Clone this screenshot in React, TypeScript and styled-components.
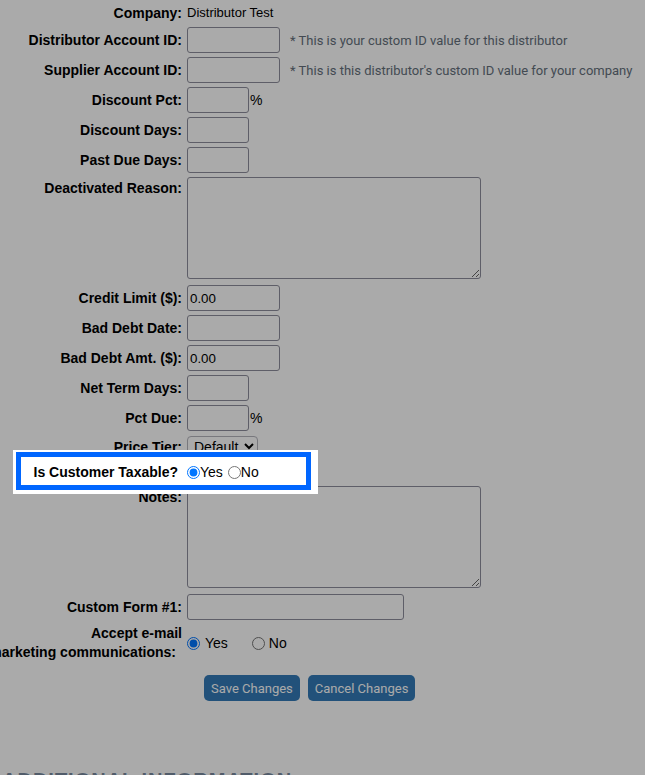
import React from "react";
import styled, { createGlobalStyle, css } from "styled-components";

const GlobalStyle = createGlobalStyle`
  html, body {
    margin: 0;
    padding: 0;
    background: #ffffff;
    font-family: "Liberation Sans", Arial, sans-serif;
    overflow: hidden;
  }
`;

const Page = styled.div`
  position: relative;
  width: 645px;
  min-height: 775px;
`;

const Dim = styled.div`
  position: fixed;
  inset: 0;
  background: rgba(0, 0, 0, 0.333);
  z-index: 10;
  pointer-events: none;
`;

const Form = styled.form`
  display: flex;
  flex-direction: column;
  gap: 4px;
  padding-top: 3px;
`;

const Row = styled.div<{ $top?: boolean; $after?: number; $spot?: boolean; $h?: number }>`
  display: grid;
  grid-template-columns: 182px 1fr;
  column-gap: 5px;
  align-items: ${(p) => (p.$top ? "start" : "center")};
  margin-bottom: ${(p) => p.$after ?? 0}px;
  min-height: ${(p) => p.$h ?? 0}px;
  ${(p) =>
    p.$spot &&
    css`
      position: relative;
      z-index: 11;
      &::before {
        content: "";
        position: absolute;
        left: 13px;
        top: -12px;
        width: 305px;
        height: 44px;
        background: #ffffff;
        z-index: -1;
      }
      &::after {
        content: "";
        position: absolute;
        left: 16px;
        top: -10px;
        width: 295px;
        height: 38px;
        box-sizing: border-box;
        border: 5px solid #0066ff;
        z-index: -1;
      }
    `}
`;

const Label = styled.div<{ $pt?: number; $pr?: number; $lh?: number }>`
  display: flex;
  justify-content: flex-end;
  font-size: 14px;
  font-weight: bold;
  color: #000;
  white-space: nowrap;
  text-align: right;
  line-height: ${(p) => p.$lh ?? 16}px;
  padding-top: ${(p) => p.$pt ?? 0}px;
  padding-right: ${(p) => p.$pr ?? 0}px;
`;

const SubLine = styled.span`
  padding-right: 6px;
`;

const Field = styled.div`
  display: flex;
  align-items: center;
`;

const Value = styled.span`
  font-size: 13px;
  color: #000;
  line-height: 20px;
`;

const TextInput = styled.input<{ $w: number }>`
  box-sizing: border-box;
  width: ${(p) => p.$w}px;
  height: 26px;
  margin: 0;
  padding: 1px 2px;
  border: 1px solid #8e8e9c;
  border-radius: 3px;
  background: #fff;
  font-family: "Liberation Sans", Arial, sans-serif;
  font-size: 13.33px;
  color: #000;
`;

const TextArea = styled.textarea`
  display: block;
  box-sizing: border-box;
  width: 294px;
  height: 102px;
  margin: 0;
  border: 1px solid #8e8e9c;
  border-radius: 3px;
  background: #fff;
  font-family: "Liberation Mono", monospace;
  font-size: 13px;
`;

const Unit = styled.span`
  font-size: 14px;
  color: #000;
  margin-left: 1px;
`;

const Note = styled.span`
  font-family: Roboto, "Liberation Sans", sans-serif;
  font-size: 13px;
  color: #65707c;
  margin-left: 10px;
  white-space: nowrap;
`;

const Select = styled.select`
  box-sizing: border-box;
  width: 71px;
  height: 21px;
  margin: 0;
  padding: 0 2px;
  border: 1px solid #b4b4bc;
  border-radius: 4px;
  background: #fff;
  font-family: "Liberation Sans", Arial, sans-serif;
  font-size: 14px;
  color: #000;
`;

const RadioGroup = styled.div<{ $gap: number }>`
  display: flex;
  align-items: center;
  gap: ${(p) => p.$gap}px;
`;

const RadioLabel = styled.label<{ $gap: number }>`
  display: inline-flex;
  align-items: center;
  gap: ${(p) => p.$gap}px;
  font-size: 14px;
  color: #000;
  line-height: 16px;
`;

const Radio = styled.input`
  width: 13px;
  height: 13px;
  margin: 0;
`;

const Buttons = styled.div`
  display: flex;
  gap: 8px;
  padding-left: 17px;
  margin-top: 9px;
`;

const Button = styled.button`
  height: 26px;
  padding: 0 7px;
  border: none;
  border-radius: 5px;
  background: #337ab7;
  color: #ffffff;
  font-family: Roboto, "Liberation Sans", sans-serif;
  font-size: 13px;
  cursor: pointer;
`;

const Heading = styled.h3`
  margin: 67px 0 0 2px;
  font-family: "Liberation Sans", Arial, sans-serif;
  font-size: 20px;
  line-height: 24px;
  font-weight: bold;
  letter-spacing: 1px;
  color: #7a8ba0;
  white-space: nowrap;
`;

type SimpleRow = { label: string; w: number; value?: string; unit?: string; note?: string };

const topRows: SimpleRow[] = [
  { label: "Distributor Account ID:", w: 93, note: "* This is your custom ID value for this distributor" },
  { label: "Supplier Account ID:", w: 93, note: "* This is this distributor's custom ID value for your company" },
  { label: "Discount Pct:", w: 62, unit: "%" },
  { label: "Discount Days:", w: 62 },
  { label: "Past Due Days:", w: 62 },
];

const midRows: SimpleRow[] = [
  { label: "Credit Limit ($):", w: 93, value: "0.00" },
  { label: "Bad Debt Date:", w: 93 },
  { label: "Bad Debt Amt. ($):", w: 93, value: "0.00" },
  { label: "Net Term Days:", w: 62 },
  { label: "Pct Due:", w: 62, unit: "%" },
];

function InputRow({ r }: { r: SimpleRow }) {
  return (
    <Row>
      <Label>{r.label}</Label>
      <Field>
        <TextInput $w={r.w} defaultValue={r.value ?? ""} />
        {r.unit && <Unit>{r.unit}</Unit>}
        {r.note && <Note>{r.note}</Note>}
      </Field>
    </Row>
  );
}

export default function App() {
  return (
    <Page>
      <GlobalStyle />
      <Form onSubmit={(e) => e.preventDefault()}>
        <Row $h={20}>
          <Label $lh={20}>Company:</Label>
          <Value>Distributor Test</Value>
        </Row>
        {topRows.map((r) => (
          <InputRow key={r.label} r={r} />
        ))}
        <Row $top $after={2}>
          <Label $pt={3}>Deactivated Reason:</Label>
          <TextArea />
        </Row>
        {midRows.map((r) => (
          <InputRow key={r.label} r={r} />
        ))}
        <Row $h={23}>
          <Label>Price Tier:</Label>
          <Field>
            <Select defaultValue="Default">
              <option>Default</option>
            </Select>
          </Field>
        </Row>
        <Row $spot $h={20}>
          <Label $pr={4}>Is Customer Taxable?</Label>
          <RadioGroup $gap={5}>
            <RadioLabel $gap={0}>
              <Radio type="radio" name="taxable" defaultChecked />
              Yes
            </RadioLabel>
            <RadioLabel $gap={0}>
              <Radio type="radio" name="taxable" />
              No
            </RadioLabel>
          </RadioGroup>
        </Row>
        <Row $top $after={2}>
          <Label $pt={3}>Notes:</Label>
          <TextArea />
        </Row>
        <Row>
          <Label>Custom Form #1:</Label>
          <Field>
            <TextInput $w={217} />
          </Field>
        </Row>
        <Row>
          <Label $lh={19}>
            <div>
              Accept e-mail
              <br />
              <SubLine>marketing communications:</SubLine>
            </div>
          </Label>
          <RadioGroup $gap={24}>
            <RadioLabel $gap={5}>
              <Radio type="radio" name="marketing" defaultChecked />
              Yes
            </RadioLabel>
            <RadioLabel $gap={4}>
              <Radio type="radio" name="marketing" />
              No
            </RadioLabel>
          </RadioGroup>
        </Row>
        <Row>
          <div />
          <Buttons>
            <Button type="submit">Save Changes</Button>
            <Button type="button">Cancel Changes</Button>
          </Buttons>
        </Row>
      </Form>
      <Heading>ADDITIONAL INFORMATION</Heading>
      <Dim />
    </Page>
  );
}
